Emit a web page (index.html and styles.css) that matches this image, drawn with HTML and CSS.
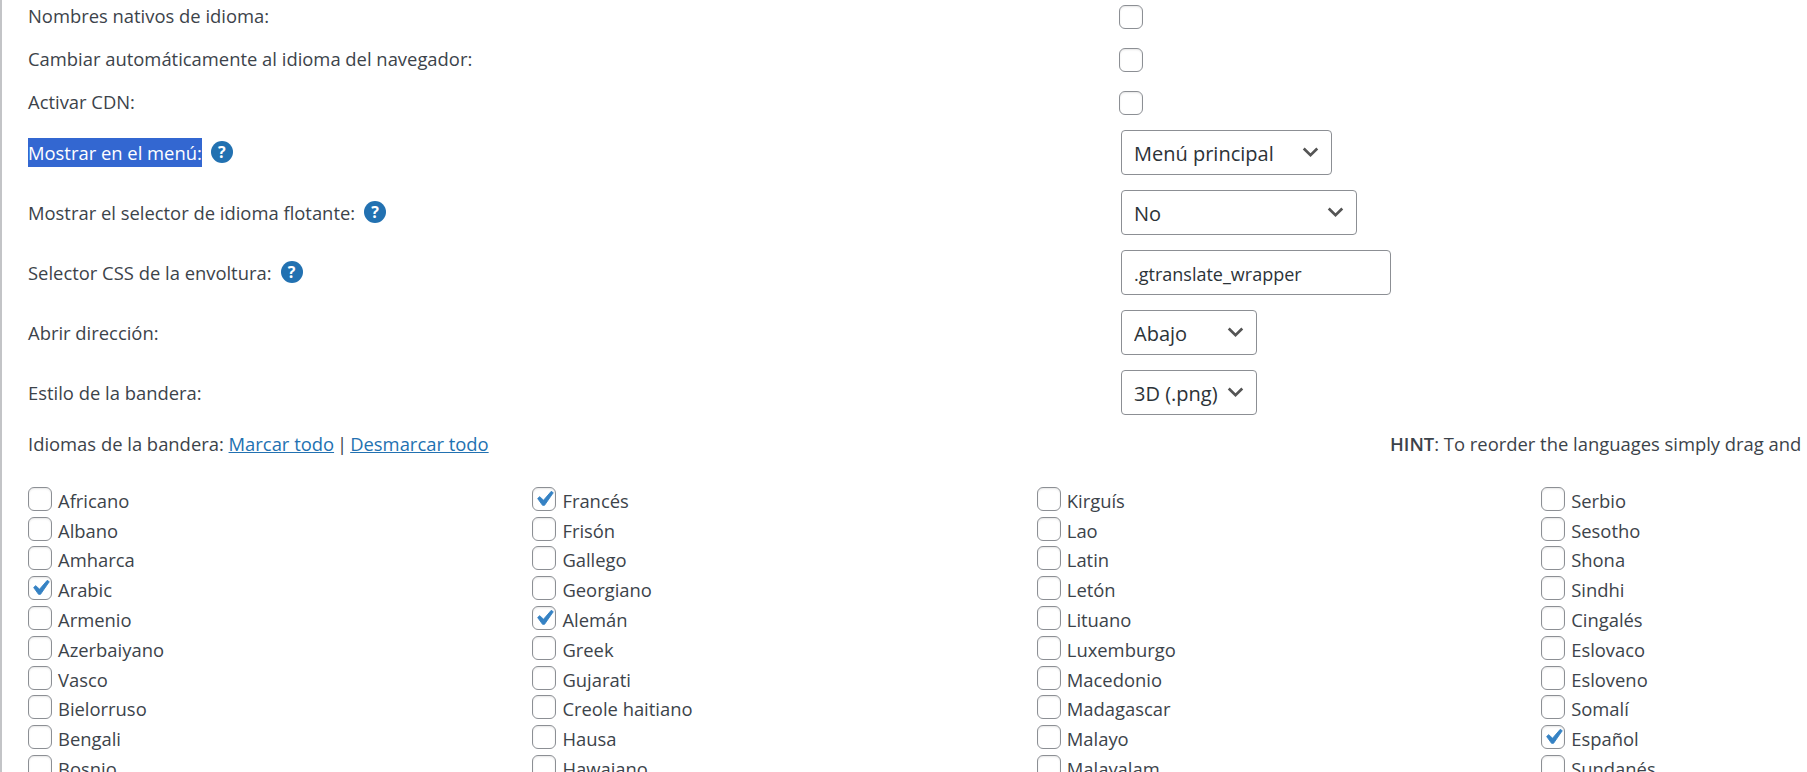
FILE: index.html
```html
<!DOCTYPE html>
<html lang="es">
<head>
    <meta charset="UTF-8">
    <meta name="viewport" content="width=device-width, initial-scale=1.0">
    <title>GTranslate</title>
    <link rel="stylesheet" href="styles.css">
</head>
<body>
    <div class="panel">
        <div class="row">
            <div class="row-label">Nombres nativos de idioma:</div>
            <input type="checkbox">
        </div>
        <div class="row">
            <div class="row-label">Cambiar automáticamente al idioma del navegador:</div>
            <input type="checkbox">
        </div>
        <div class="row">
            <div class="row-label">Activar CDN:</div>
            <input type="checkbox">
        </div>
        <div class="row row-tall row-first-tall">
            <div class="row-label"><span class="selected-text">Mostrar en el menú:</span><span class="help">?</span></div>
            <select class="w-menu"><option>Menú principal</option></select>
        </div>
        <div class="row row-tall">
            <div class="row-label">Mostrar el selector de idioma flotante:<span class="help">?</span></div>
            <select class="w-float"><option>No</option></select>
        </div>
        <div class="row row-tall">
            <div class="row-label">Selector CSS de la envoltura:<span class="help">?</span></div>
            <input type="text" class="w-text" value=".gtranslate_wrapper">
        </div>
        <div class="row row-tall">
            <div class="row-label">Abrir dirección:</div>
            <select class="w-small"><option>Abajo</option></select>
        </div>
        <div class="row row-tall">
            <div class="row-label">Estilo de la bandera:</div>
            <select class="w-small"><option>3D (.png)</option></select>
        </div>

        <div class="flag-head">
            <div class="flag-title">Idiomas de la bandera: <a href="#">Marcar todo</a><span class="sep">|</span><a href="#">Desmarcar todo</a></div>
            <div class="hint"><b>HINT</b>: To reorder the languages simply drag and</div>
        </div>

        <div class="languages">
            <div class="lang-col">
                <label><input type="checkbox">Africano</label>
                <label><input type="checkbox">Albano</label>
                <label><input type="checkbox">Amharca</label>
                <label><input type="checkbox" checked>Arabic</label>
                <label><input type="checkbox">Armenio</label>
                <label><input type="checkbox">Azerbaiyano</label>
                <label><input type="checkbox">Vasco</label>
                <label><input type="checkbox">Bielorruso</label>
                <label><input type="checkbox">Bengali</label>
                <label><input type="checkbox">Bosnio</label>
            </div>
            <div class="lang-col">
                <label><input type="checkbox" checked>Francés</label>
                <label><input type="checkbox">Frisón</label>
                <label><input type="checkbox">Gallego</label>
                <label><input type="checkbox">Georgiano</label>
                <label><input type="checkbox" checked>Alemán</label>
                <label><input type="checkbox">Greek</label>
                <label><input type="checkbox">Gujarati</label>
                <label><input type="checkbox">Creole haitiano</label>
                <label><input type="checkbox">Hausa</label>
                <label><input type="checkbox">Hawaiano</label>
            </div>
            <div class="lang-col">
                <label><input type="checkbox">Kirguís</label>
                <label><input type="checkbox">Lao</label>
                <label><input type="checkbox">Latin</label>
                <label><input type="checkbox">Letón</label>
                <label><input type="checkbox">Lituano</label>
                <label><input type="checkbox">Luxemburgo</label>
                <label><input type="checkbox">Macedonio</label>
                <label><input type="checkbox">Madagascar</label>
                <label><input type="checkbox">Malayo</label>
                <label><input type="checkbox">Malayalam</label>
            </div>
            <div class="lang-col">
                <label><input type="checkbox">Serbio</label>
                <label><input type="checkbox">Sesotho</label>
                <label><input type="checkbox">Shona</label>
                <label><input type="checkbox">Sindhi</label>
                <label><input type="checkbox">Cingalés</label>
                <label><input type="checkbox">Eslovaco</label>
                <label><input type="checkbox">Esloveno</label>
                <label><input type="checkbox">Somalí</label>
                <label><input type="checkbox" checked>Español</label>
                <label><input type="checkbox">Sundanés</label>
            </div>
        </div>
    </div>
</body>
</html>
```
FILE: styles.css
```css
html, body {
    margin: 0;
    padding: 0;
    height: 100%;
    overflow: hidden;
    background-color: #fff;
}

body {
    font-family: "Open Sans", Arial, sans-serif;
    font-size: 18.4px;
    color: #3c434a;
}

.panel {
    border-left: 2px solid #c3c4c7;
    margin-top: -5px;
    padding-left: 26px;
}

.row {
    display: flex;
    align-items: center;
    height: 43px;
}

.row-tall {
    height: 60px;
}

.row-first-tall {
    margin-top: -1.5px;
}

.row-label {
    flex: 0 0 1091px;
    display: flex;
    align-items: center;
    margin-top: -2px;
}

.row-tall .row-label {
    margin-top: -1px;
}

.selected-text {
    background-color: #3367d1;
    color: #fff;
    line-height: 29px;
}

.help {
    width: 22px;
    height: 22px;
    margin-left: 9px;
    border-radius: 50%;
    background-color: #2271b1;
    color: #fff;
    font-weight: 700;
    font-size: 16px;
    line-height: 22px;
    text-align: center;
}

input[type="checkbox"] {
    appearance: none;
    flex: none;
    width: 24px;
    height: 24px;
    margin: 0;
    border: 1px solid #8c8f94;
    border-radius: 6px;
    background: #fff center / 30px no-repeat;
    box-shadow: inset 0 1px 2px rgba(0, 0, 0, 0.1);
}

input[type="checkbox"]:checked {
    background-image: url("data:image/svg+xml;utf8,%3Csvg xmlns='http://www.w3.org/2000/svg' viewBox='0 0 20 20'%3E%3Cpath fill='%233582c4' stroke='%233582c4' stroke-width='.6' d='M14.83 4.89l1.34.94-5.81 8.38H9.02L5.78 9.67l1.34-1.25 2.57 2.4z'/%3E%3C/svg%3E");
}

select, input[type="text"] {
    appearance: none;
    box-sizing: border-box;
    height: 45px;
    margin: 0 0 0 2px;
    padding: 2px 13px 0 12px;
    border: 1px solid #8c8f94;
    border-radius: 4px;
    background-color: #fff;
    font: inherit;
    font-size: 18px;
    color: #2c3338;
}

select {
    font-size: 20px;
    background: #fff url("data:image/svg+xml;utf8,%3Csvg xmlns='http://www.w3.org/2000/svg' viewBox='0 0 20 20'%3E%3Cpath fill='none' stroke='%23555' stroke-width='2' d='M5 7l5 5 5-5'/%3E%3C/svg%3E") right 7px center / 27px no-repeat;
}

.w-menu { width: 211px; }
.w-float { width: 236px; }
.w-text { width: 270px; }
.w-small { width: 136px; }

.flag-head {
    display: flex;
    align-items: center;
    height: 41px;
    white-space: nowrap;
}

.flag-title {
    flex: 0 0 1362px;
}

.flag-title a {
    color: #2271b1;
}

.sep {
    margin: 0 3px;
}

.hint b {
    font-weight: 600;
}

.languages {
    display: flex;
    margin-top: 22px;
}

.lang-col {
    flex: 0 0 504.4px;
}

.lang-col label {
    display: flex;
    align-items: center;
    gap: 6px;
    height: 29.8px;
}

.lang-col input[type="checkbox"] {
    margin-top: -3px;
}
```
